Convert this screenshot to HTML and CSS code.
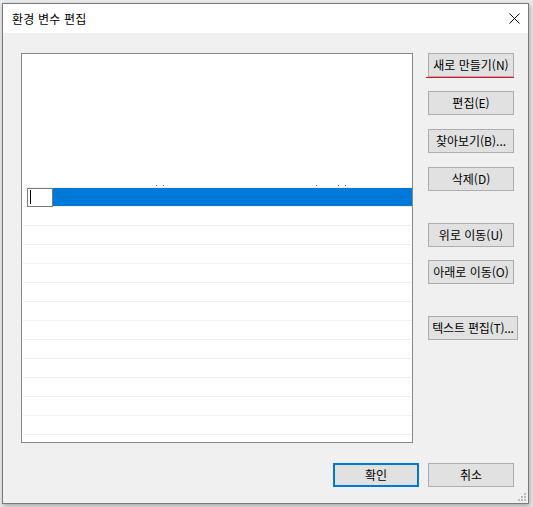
FILE: index.html
```html
<!DOCTYPE html>
<html lang="ko">
<head>
<meta charset="utf-8">
<title>환경 변수 편집</title>
<link rel="stylesheet" href="styles.css">
</head>
<body>
<div class="dialog">
  <div class="titlebar">
    <span class="title">환경 변수 편집</span>
    <svg class="close" width="11" height="11" viewBox="0 0 11 11" aria-hidden="true">
      <path d="M0.5 0.5 L10.5 10.5 M10.5 0.5 L0.5 10.5" stroke="#000" stroke-width="1" fill="none"/>
    </svg>
  </div>
  <div class="content">
    <div class="list">
      <div class="blank"></div>
      <div class="dots"><i class="d1"></i><i class="d2"></i><i class="d3"></i><i class="d4"></i><i class="d5"></i></div>
      <div class="row selected">
        <div class="editbox"><span class="caret"></span></div>
        <div class="highlight"></div>
      </div>
      <div class="row"></div>
      <div class="row"></div>
      <div class="row"></div>
      <div class="row"></div>
      <div class="row"></div>
      <div class="row"></div>
      <div class="row"></div>
      <div class="row"></div>
      <div class="row"></div>
      <div class="row"></div>
      <div class="row"></div>
      <div class="row"></div>
      <div class="row"></div>
    </div>
    <div class="side">
      <button class="btn btn-new">새로 만들기(N)</button>
      <button class="btn g14">편집(E)</button>
      <button class="btn g14">찾아보기(B)...</button>
      <button class="btn g14">삭제(D)</button>
      <button class="btn g32">위로 이동(U)</button>
      <button class="btn g13">아래로 이동(O)</button>
      <button class="btn btn-wide g32">텍스트 편집(T)...</button>
    </div>
  </div>
  <div class="footer">
    <button class="btn btn-default">확인</button>
    <button class="btn">취소</button>
  </div>
  <svg class="grip" width="8" height="8" viewBox="0 0 8 8" aria-hidden="true">
    <rect x="6" y="0" width="2" height="2" fill="#bcbcbc"/>
    <rect x="3" y="3" width="2" height="2" fill="#bcbcbc"/>
    <rect x="6" y="3" width="2" height="2" fill="#bcbcbc"/>
    <rect x="0" y="6" width="2" height="2" fill="#bcbcbc"/>
    <rect x="3" y="6" width="2" height="2" fill="#bcbcbc"/>
    <rect x="6" y="6" width="2" height="2" fill="#bcbcbc"/>
  </svg>
</div>
</body>
</html>
```

FILE: styles.css
```css
html, body {
  margin: 0;
  padding: 0;
}
body {
  width: 533px;
  height: 507px;
  overflow: hidden;
  background: #ebebeb;
  padding: 3px 0 0 2px;
  box-sizing: border-box;
  font-family: "Noto Sans CJK KR", "Noto Sans", sans-serif;
  font-size: 12px;
  color: #000;
}
.dialog {
  position: relative;
  width: 527px;
  height: 501px;
  box-sizing: border-box;
  border: 1px solid #7a7a7a;
  background: #f0f0f0;
  display: flex;
  flex-direction: column;
  box-shadow: 1px 2px 5px rgba(0, 0, 0, 0.3);
}
.titlebar {
  height: 29px;
  background: #fff;
  display: flex;
  align-items: center;
  padding-left: 9px;
  flex-shrink: 0;
}
.title {
  font-size: 12px;
  line-height: 16px;
  letter-spacing: 0.2px;
}
.close {
  margin-left: auto;
  margin-right: 8px;
  display: block;
}
.content {
  display: flex;
  padding: 20px 0 0 18px;
}
.list {
  width: 392px;
  height: 390px;
  box-sizing: border-box;
  border: 1px solid #828790;
  background: #fff;
  overflow: hidden;
  flex-shrink: 0;
}
.blank {
  height: 131px;
}
.dots {
  height: 1px;
  margin-bottom: 1px;
  display: flex;
}
.dots i {
  display: block;
  width: 1px;
  height: 1px;
  background: #5a5a8c;
}
.dots .d1 { margin-left: 134px; }
.dots .d2 { margin-left: 6px; }
.dots .d3 { margin-left: 152px; }
.dots .d4 { margin-left: 21px; }
.dots .d5 { margin-left: 6px; }
.row {
  height: 19px;
  box-sizing: border-box;
  border-top: 1px solid #f0f0f0;
  margin-left: 1px;
}
.row.selected {
  display: flex;
  align-items: flex-start;
  position: relative;
  z-index: 1;
}
.editbox {
  margin-left: 4px;
  width: 26px;
  height: 19px;
  box-sizing: border-box;
  border: 1px solid #7a7a7a;
  background: #fff;
  flex-shrink: 0;
}
.caret {
  display: block;
  width: 1px;
  height: 14px;
  margin: 1px 0 0 2px;
  background: #000;
}
.highlight {
  flex: 1;
  height: 18px;
  background: #0078d7;
}
.side {
  display: flex;
  flex-direction: column;
  align-items: flex-start;
  margin-left: 15px;
}
.btn {
  display: block;
  width: 86px;
  height: 24px;
  box-sizing: border-box;
  border: 1px solid #adadad;
  background: #e1e1e1;
  padding: 0;
  margin: 0;
  font-family: "Noto Sans CJK KR", "Noto Sans", sans-serif;
  font-size: 12px;
  line-height: 20px;
  color: #000;
  text-align: center;
  white-space: nowrap;
  overflow: hidden;
}
.btn-new {
  position: relative;
  overflow: visible;
}
.btn-new::after {
  content: "";
  position: absolute;
  left: -3px;
  right: -1px;
  bottom: -2px;
  height: 1px;
  background: #e81123;
}
.btn-wide {
  width: 90px;
  letter-spacing: -0.2px;
}
.g14 { margin-top: 14px; }
.g13 { margin-top: 13px; }
.g32 { margin-top: 32px; }
.footer {
  display: flex;
  justify-content: flex-end;
  gap: 9px;
  margin-top: 20px;
  padding-right: 14px;
}
.btn-default {
  border: 2px solid #0078d7;
}
.grip {
  position: absolute;
  right: 2px;
  bottom: 2px;
  display: block;
}
```
